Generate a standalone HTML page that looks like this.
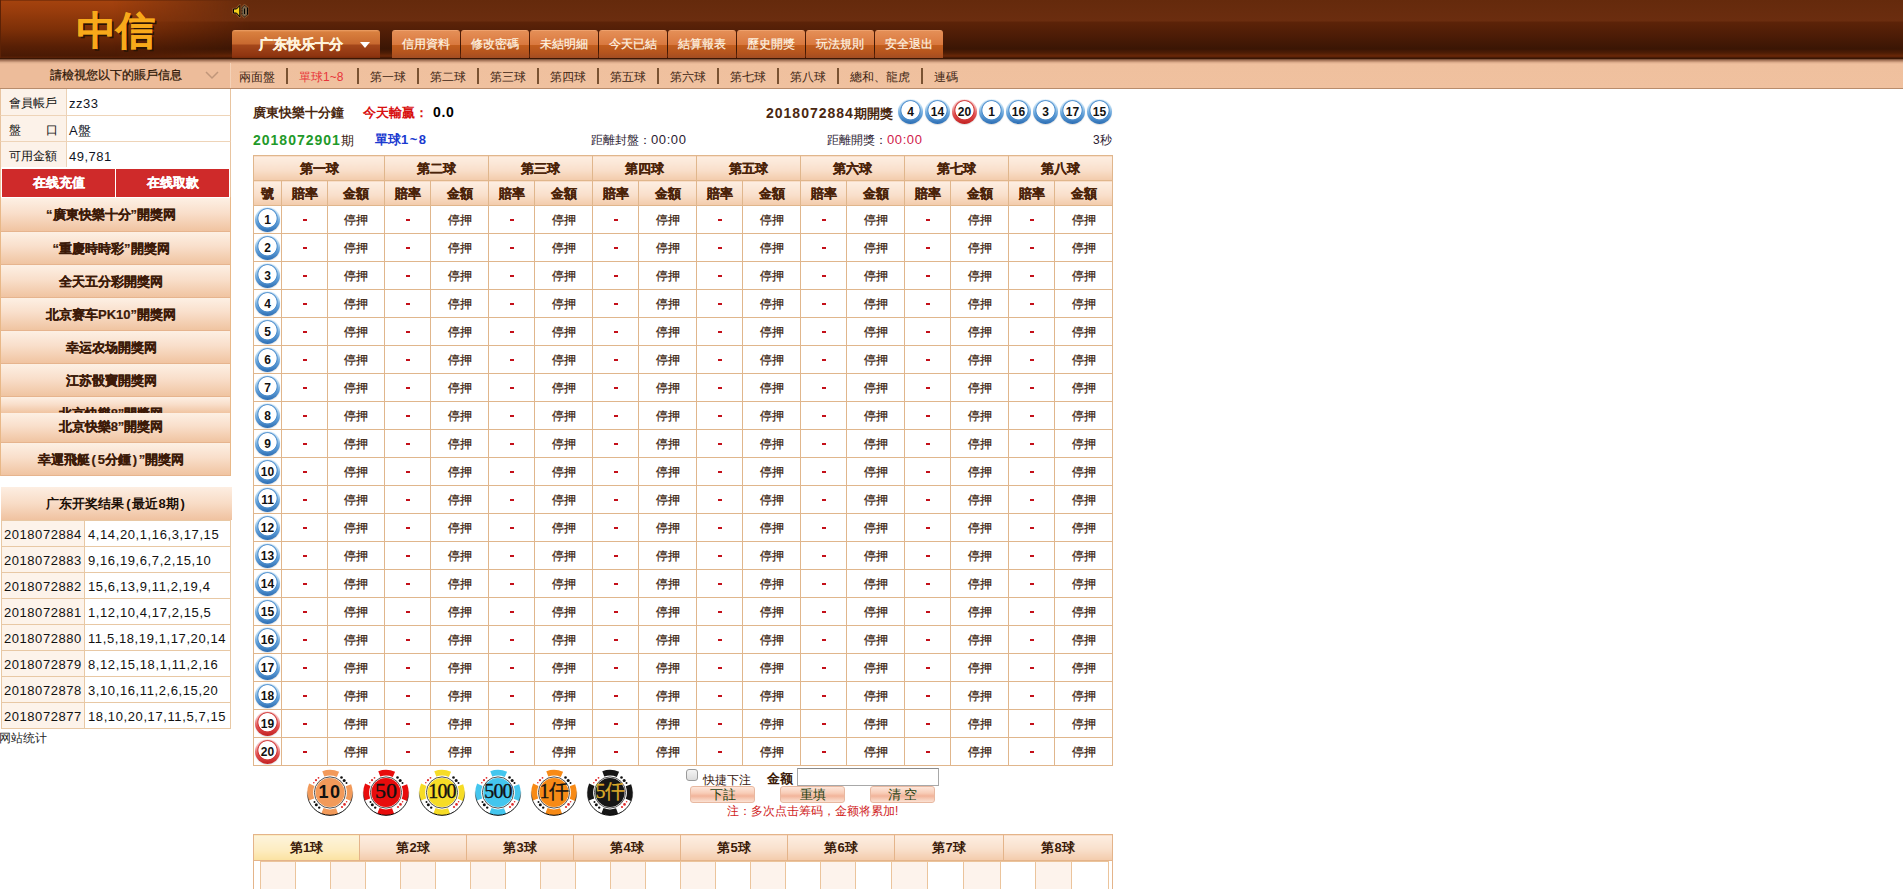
<!DOCTYPE html>
<html><head><meta charset="utf-8">
<style>
*{box-sizing:border-box}
html,body{margin:0;padding:0}
body{width:1903px;height:889px;overflow:hidden;position:relative;background:#fff;font-family:"Liberation Sans",sans-serif;font-size:12px;color:#000}
.abs{position:absolute}
/* header */
#hdr{position:absolute;left:0;top:0;width:1903px;height:60px;background:
 linear-gradient(180deg,#652a0c 0px,#6b2d0f 21px,#5c2308 22px,#4c1c06 36px,#3a1504 49px,#4e1d05 53px,#6a2808 56px,#5a2006 57px,#3a1604 58px,#3a1604 60px);overflow:hidden}
#hdrglow{position:absolute;left:0;top:0;width:250px;height:58px;background:linear-gradient(180deg,#5c2206 0,#a4420e 1px,#983c0c 20%,#7e3008 50%,#581f05 80%,#4a1a04 96%,#5a2006 100%);-webkit-mask-image:linear-gradient(90deg,#000 0,#000 45%,rgba(0,0,0,0) 100%);box-shadow:inset 1px 0 0 #5c2206}
#logo{position:absolute;left:77px;top:8px;font-size:39px;font-weight:900;-webkit-text-stroke:0.6px #f8a91a;color:#f8a91a;text-shadow:2px 2px 0 #2a1404;letter-spacing:0;line-height:46px}
.spk{position:absolute;left:232px;top:4px}
.ddl{position:absolute;left:232px;top:30px;width:148px;height:28px;border-radius:3px 3px 0 0;
 background:linear-gradient(180deg,#eca066 0,#d9803f 2px,#c8692f 14px,#a4471a 15px,#8e3410 26px,#7a2c0a 28px);color:#fff3dc;font-weight:bold;font-size:14px;line-height:28px;padding-left:27px;-webkit-text-stroke:0.3px #fff3dc}
.ddl i{position:absolute;left:128px;top:12px;width:0;height:0;border-left:5px solid transparent;border-right:5px solid transparent;border-top:6px solid #fff}
.nav{position:absolute;top:30px;height:28px;width:68px;border-radius:3px 3px 0 0;
 background:linear-gradient(180deg,#f2aa78 0,#e48e56 1.5px,#d9783e 15px,#c25e1e 15.5px,#b4541e 23px,#a24c22 28px);color:#fff4e2;font-size:12px;line-height:28px;text-align:center;-webkit-text-stroke:0.2px #fff4e2}
/* subnav */
#sub{position:absolute;left:0;top:59px;width:1903px;height:30px;background:linear-gradient(180deg,#6e4630 0,#a8785c 1.5px,#dcac8c 3.5px,#efc09e 5px,#f0c19f 29px);border-bottom:1px solid #b88c6c}
#subl{position:absolute;left:0;top:59px;width:231px;height:30px;background:linear-gradient(180deg,#6e4630 0,#a8785c 1.5px,#dcac8c 3.5px,#edbc9a 5px,#edbc9a 29px);border-bottom:1px solid #b88c6c;color:#3a2010;font-size:12px}
.tab{position:absolute;top:70px;font-size:12px;line-height:14px;color:#3d2412}
.sep{position:absolute;top:68px;width:2px;height:16px;background:#7a5232}
/* left */
.acc{position:absolute;left:0;width:231px;height:26px;border-left:1px solid #e8c4a0;border-right:1px solid #e8c4a0;border-bottom:1px solid #eed4b8;font-size:12px}
.acc .l{position:absolute;left:0;top:0;width:66px;height:100%;background:#fcf2e9;border-right:1px solid #ecd2b6;padding-left:8px;line-height:29px;color:#111}
.acc .v{position:absolute;left:68px;top:0;line-height:29px;color:#0f1424;font-size:13px;letter-spacing:0.5px}
.rbtn{position:absolute;top:169px;height:28px;background:#cf2a2a;color:#fff;font-weight:bold;font-size:13px;text-align:center;line-height:28px;-webkit-text-stroke:0.3px #fff}
.lbtn{position:absolute;left:1px;width:229px;height:33px;background:linear-gradient(180deg,#fdf0e4 0,#f9dfcb 45%,#f0c4a1 100%);border-bottom:1px solid #e6b48e;color:#3c1a08;font-weight:bold;font-size:13px;text-align:center;line-height:33px;overflow:hidden;white-space:nowrap;padding-right:9px;-webkit-text-stroke:0.2px #3c1a08}

.res{border-collapse:collapse;width:230px;table-layout:fixed}
.res td{border:1px solid #e8c8a4;height:26px;padding:2px 0 0 3px;font-size:13px;letter-spacing:0.6px;color:#111;white-space:nowrap;overflow:hidden}
.res td.p{width:83px;background:#fdf3ea;padding-left:2px;letter-spacing:0.55px}

#mt{border-collapse:collapse;table-layout:fixed;width:859px}
#mt th,#mt td{border:1px solid #e0b68c;padding:0;text-align:center;overflow:hidden;white-space:nowrap}
#mt th{height:25px;background:linear-gradient(180deg,#fdeee2 0,#f9e0cc 55%,#f3cbab 100%);font-weight:bold;font-size:13px;color:#4a2208;padding-top:2px;line-height:22px;-webkit-text-stroke:0.2px #4a2208}
#mt td{height:28px;font-size:12px;color:#36190a}
#mt td.tp{padding-top:2px;-webkit-text-stroke:0.2px #36190a}
.dash{display:inline-block;width:4px;height:2px;background:#c4101a;vertical-align:middle;position:relative;top:0px}
.ball{display:inline-block;width:25px;height:25px;border-radius:50%;vertical-align:middle;position:relative;
 background:radial-gradient(circle at 50% 45%,#fff 0,#fff 8.7px,#4a8ccc 9.5px,rgba(74,140,204,0) 10.8px),linear-gradient(180deg,#e8f4fc 0,#b4d8f2 30%,#62a0d8 62%,#2c6eb4 100%);
 font:bold 12px/26px "Liberation Sans",sans-serif;color:#111;text-align:center;box-shadow:0 1px 1px rgba(150,150,150,.3)}
.ball.r{background:radial-gradient(circle at 50% 45%,#fff 0,#fff 8.7px,#d03434 9.5px,rgba(208,52,52,0) 10.8px),linear-gradient(180deg,#fde8e8 0,#f4b0b0 30%,#e25252 62%,#c22020 100%)}

.cb{margin:0;width:13px;height:13px}
.btn{top:786px;width:65px;height:17px;border:1px solid #e8b8a0;border-radius:3px;background:linear-gradient(180deg,#fde6da 0,#f8cdb8 40%,#f2b49a 60%,#fbe2d4 100%);color:#1c4010;font-size:13px;line-height:15px;text-align:center}
#bt{border-collapse:collapse;table-layout:fixed;width:859px}
#bt th{border:1px solid #e4b48a;height:26px;background:linear-gradient(180deg,#fdeee2 0,#f9e0cc 55%,#f3cbab 100%);font-weight:bold;font-size:13px;color:#3a1a08;padding:0}
#bt th.sel{background:linear-gradient(180deg,#fdf4dc 0,#fdecc0 60%,#fbe2a0 100%)}
#bt td{border:1px solid #e4b48a;padding:0}
.inner{border-collapse:collapse;table-layout:fixed;width:848px}
.inner td{border:1px solid #ebc49c !important;height:40px;background:#fff}
.inner td.o{background:#fdf3ec}
.pp{margin:0 1.8px}
</style></head><body>
<div id="hdr"><div id="hdrglow"></div>
<div id="logo">中信</div>
<svg class="abs" style="left:230px;top:3px" width="22" height="17" viewBox="0 0 22 17">
<g fill="none" stroke="#9a6236" stroke-width="2.6" stroke-linejoin="round" opacity=".7"><path d="M3.5 6H6.5L9.8 2.5V13.8L6.5 10H3.5Z"/><path d="M12 4.8L14.4 2.3L17.6 4.8V11.6L14.4 14.1L12 11.6Z"/></g>
<path d="M3.5 6H6.5L9.8 2.5V13.8L6.5 10H3.5Z" fill="#f2cc1c" stroke="#000" stroke-width="1"/>
<path d="M12 4.8L14.4 2.3L17.6 4.8V11.6L14.4 14.1L12 11.6Z" fill="#7c664a" stroke="#000" stroke-width="0.9" stroke-dasharray="1 0.6"/>
<path d="M17.6 4.8V11.6M14.5 5.5V11" stroke="#000" stroke-width="1"/>
</svg>
<div class="ddl">广东快乐十分<i></i></div>
<div class="nav" style="left:392px">信用資料</div>
<div class="nav" style="left:461px">修改密碼</div>
<div class="nav" style="left:530px">未結明細</div>
<div class="nav" style="left:599px">今天已結</div>
<div class="nav" style="left:668px">結算報表</div>
<div class="nav" style="left:737px">歷史開獎</div>
<div class="nav" style="left:806px">玩法規則</div>
<div class="nav" style="left:875px">安全退出</div>
</div>
<div id="sub"></div>
<div id="subl"></div><div class="abs" style="left:230px;top:63px;width:1px;height:25px;background:#f4d2b8"></div>

<div class="abs" style="left:50px;top:60px;height:30px;line-height:31px;font-size:12px;color:#2e1606;-webkit-text-stroke:0.25px #2e1606;letter-spacing:-0.05px">請檢視您以下的賬戶信息</div>
<svg class="abs" style="left:205px;top:71px" width="14" height="9" viewBox="0 0 14 9"><path d="M1 1l6 6 6-6" fill="none" stroke="#c0967a" stroke-width="1.5"/></svg>
<div class="tab" style="left:239px">兩面盤</div><div class="sep" style="left:286px"></div>
<div class="tab" style="left:299px;color:#e8353a">單球1~8</div><div class="sep" style="left:357px"></div>
<div class="tab" style="left:370px">第一球</div><div class="sep" style="left:417px"></div>
<div class="tab" style="left:430px">第二球</div><div class="sep" style="left:477px"></div>
<div class="tab" style="left:490px">第三球</div><div class="sep" style="left:537px"></div>
<div class="tab" style="left:550px">第四球</div><div class="sep" style="left:597px"></div>
<div class="tab" style="left:610px">第五球</div><div class="sep" style="left:657px"></div>
<div class="tab" style="left:670px">第六球</div><div class="sep" style="left:717px"></div>
<div class="tab" style="left:730px">第七球</div><div class="sep" style="left:777px"></div>
<div class="tab" style="left:790px">第八球</div><div class="sep" style="left:837px"></div>
<div class="tab" style="left:850px">總和、龍虎</div><div class="sep" style="left:921px"></div>
<div class="tab" style="left:934px">連碼</div>

<div class="acc" style="top:89px;height:27px"><div class="l">會員帳戶</div><div class="v">zz33</div></div>
<div class="acc" style="top:116px"><div class="l" style="text-align:justify;text-align-last:justify;padding-right:8px">盤 口</div><div class="v">A盤</div></div>
<div class="acc" style="top:142px"><div class="l">可用金額</div><div class="v">49,781</div></div>
<div class="abs" style="left:0;top:167px;width:231px;height:31px;background:#fff;border-left:1px solid #e8c4a0;border-right:1px solid #e8c4a0"></div>
<div class="rbtn" style="left:2px;width:113px">在线充值</div>
<div class="rbtn" style="left:116px;width:113px">在线取款</div>
<div class="abs" style="left:0;top:197px;width:231px;height:279px;border-left:1px solid #e8b888;border-right:1px solid #e8b888;border-bottom:1px solid #e8b888"></div>
<div class="lbtn" style="top:198px;height:34px">“廣東快樂十分”開獎网</div>
<div class="lbtn" style="top:232px">“重慶時時彩”開獎网</div>
<div class="lbtn" style="top:265px">全天五分彩開獎网</div>
<div class="lbtn" style="top:298px">北京赛车PK10”開獎网</div>
<div class="lbtn" style="top:331px">幸运农场開獎网</div>
<div class="lbtn" style="top:364px">江苏骰寶開獎网</div>
<div class="lbtn" style="top:397px;height:16px;line-height:33px;border-bottom:none">北京快樂8”開獎网</div>
<div class="lbtn" style="top:413px;height:30px;line-height:28px">北京快樂8”開獎网</div>
<div class="lbtn" style="top:443px">幸運飛艇<span class="pp">(</span>5分鍾<span class="pp">)</span>”開獎网</div>

<div class="abs" style="left:1px;top:487px;width:231px;height:33px;background:linear-gradient(180deg,#fdeee2 0,#f8dcc6 50%,#f0c2a0 100%);text-align:center;line-height:33px;font-weight:bold;font-size:13px;color:#1a0e06">广东开奖结果<span class="pp">(</span>最近8期<span class="pp">)</span></div>
<table class="abs res" style="left:1px;top:520px">
<tr><td class="p">2018072884</td><td>4,14,20,1,16,3,17,15</td></tr>
<tr><td class="p">2018072883</td><td>9,16,19,6,7,2,15,10</td></tr>
<tr><td class="p">2018072882</td><td>15,6,13,9,11,2,19,4</td></tr>
<tr><td class="p">2018072881</td><td>1,12,10,4,17,2,15,5</td></tr>
<tr><td class="p">2018072880</td><td>11,5,18,19,1,17,20,14</td></tr>
<tr><td class="p">2018072879</td><td>8,12,15,18,1,11,2,16</td></tr>
<tr><td class="p">2018072878</td><td>3,10,16,11,2,6,15,20</td></tr>
<tr><td class="p">2018072877</td><td>18,10,20,17,11,5,7,15</td></tr>
</table>
<div class="abs" style="left:-1px;top:731px;font-size:12px;color:#222;line-height:14px">网站统计</div>

<div class="abs" style="left:253px;top:105px;font-weight:bold;font-size:13px;color:#4a2810;line-height:16px">廣東快樂十分鐘</div>
<div class="abs" style="left:363px;top:105px;font-weight:bold;font-size:13px;color:#d81010;line-height:16px">今天輸贏：</div>
<div class="abs" style="left:433px;top:104px;font-weight:bold;font-size:14px;color:#000;line-height:16px;letter-spacing:0.6px">0.0</div>
<div class="abs" style="left:766px;top:105px;font-weight:bold;font-size:13px;color:#4a2810;line-height:16px"><span style="letter-spacing:1px;font-size:14px">2018072884</span>期開獎</div>
<span class="ball big" style="position:absolute;left:898px;top:99px">4</span><span class="ball big" style="position:absolute;left:925px;top:99px">14</span><span class="ball r big" style="position:absolute;left:952px;top:99px">20</span><span class="ball big" style="position:absolute;left:979px;top:99px">1</span><span class="ball big" style="position:absolute;left:1006px;top:99px">16</span><span class="ball big" style="position:absolute;left:1033px;top:99px">3</span><span class="ball big" style="position:absolute;left:1060px;top:99px">17</span><span class="ball big" style="position:absolute;left:1087px;top:99px">15</span>
<div class="abs" style="left:253px;top:132px;font-size:13px;line-height:16px;color:#3a2010"><b style="color:#1f9a2a;letter-spacing:1px;font-size:14px">2018072901</b>期</div>
<div class="abs" style="left:375px;top:132px;font-size:13px;line-height:16px;color:#1a3ad0;font-weight:bold">單球<span style="letter-spacing:1.5px">1~8</span></div>
<div class="abs" style="left:591px;top:132px;font-size:12px;line-height:16px;color:#2a2030">距離封盤：<span style="font-size:13px;letter-spacing:0.6px">00:00</span></div>
<div class="abs" style="left:827px;top:132px;font-size:12px;line-height:16px;color:#2a2030">距離開獎：<span style="color:#d0204a;font-size:13px;letter-spacing:0.6px">00:00</span></div>
<div class="abs" style="left:1093px;top:132px;font-size:12px;line-height:16px;color:#2a2030">3秒</div>
<table id="mt" class="abs" style="left:253px;top:155px"><colgroup><col style="width:28px"><col style="width:46px"><col style="width:57px"><col style="width:46px"><col style="width:58px"><col style="width:46px"><col style="width:58px"><col style="width:46px"><col style="width:58px"><col style="width:46px"><col style="width:58px"><col style="width:46px"><col style="width:58px"><col style="width:46px"><col style="width:58px"><col style="width:46px"><col style="width:58px"></colgroup><tr class="h1"><th colspan="3">第一球</th><th colspan="2">第二球</th><th colspan="2">第三球</th><th colspan="2">第四球</th><th colspan="2">第五球</th><th colspan="2">第六球</th><th colspan="2">第七球</th><th colspan="2">第八球</th></tr>
<tr class="h2"><th>號</th><th>賠率</th><th>金額</th><th>賠率</th><th>金額</th><th>賠率</th><th>金額</th><th>賠率</th><th>金額</th><th>賠率</th><th>金額</th><th>賠率</th><th>金額</th><th>賠率</th><th>金額</th><th>賠率</th><th>金額</th></tr>
<tr><td><span class="ball">1</span></td><td><b class="dash"></b></td><td class="tp">停押</td><td><b class="dash"></b></td><td class="tp">停押</td><td><b class="dash"></b></td><td class="tp">停押</td><td><b class="dash"></b></td><td class="tp">停押</td><td><b class="dash"></b></td><td class="tp">停押</td><td><b class="dash"></b></td><td class="tp">停押</td><td><b class="dash"></b></td><td class="tp">停押</td><td><b class="dash"></b></td><td class="tp">停押</td></tr>
<tr><td><span class="ball">2</span></td><td><b class="dash"></b></td><td class="tp">停押</td><td><b class="dash"></b></td><td class="tp">停押</td><td><b class="dash"></b></td><td class="tp">停押</td><td><b class="dash"></b></td><td class="tp">停押</td><td><b class="dash"></b></td><td class="tp">停押</td><td><b class="dash"></b></td><td class="tp">停押</td><td><b class="dash"></b></td><td class="tp">停押</td><td><b class="dash"></b></td><td class="tp">停押</td></tr>
<tr><td><span class="ball">3</span></td><td><b class="dash"></b></td><td class="tp">停押</td><td><b class="dash"></b></td><td class="tp">停押</td><td><b class="dash"></b></td><td class="tp">停押</td><td><b class="dash"></b></td><td class="tp">停押</td><td><b class="dash"></b></td><td class="tp">停押</td><td><b class="dash"></b></td><td class="tp">停押</td><td><b class="dash"></b></td><td class="tp">停押</td><td><b class="dash"></b></td><td class="tp">停押</td></tr>
<tr><td><span class="ball">4</span></td><td><b class="dash"></b></td><td class="tp">停押</td><td><b class="dash"></b></td><td class="tp">停押</td><td><b class="dash"></b></td><td class="tp">停押</td><td><b class="dash"></b></td><td class="tp">停押</td><td><b class="dash"></b></td><td class="tp">停押</td><td><b class="dash"></b></td><td class="tp">停押</td><td><b class="dash"></b></td><td class="tp">停押</td><td><b class="dash"></b></td><td class="tp">停押</td></tr>
<tr><td><span class="ball">5</span></td><td><b class="dash"></b></td><td class="tp">停押</td><td><b class="dash"></b></td><td class="tp">停押</td><td><b class="dash"></b></td><td class="tp">停押</td><td><b class="dash"></b></td><td class="tp">停押</td><td><b class="dash"></b></td><td class="tp">停押</td><td><b class="dash"></b></td><td class="tp">停押</td><td><b class="dash"></b></td><td class="tp">停押</td><td><b class="dash"></b></td><td class="tp">停押</td></tr>
<tr><td><span class="ball">6</span></td><td><b class="dash"></b></td><td class="tp">停押</td><td><b class="dash"></b></td><td class="tp">停押</td><td><b class="dash"></b></td><td class="tp">停押</td><td><b class="dash"></b></td><td class="tp">停押</td><td><b class="dash"></b></td><td class="tp">停押</td><td><b class="dash"></b></td><td class="tp">停押</td><td><b class="dash"></b></td><td class="tp">停押</td><td><b class="dash"></b></td><td class="tp">停押</td></tr>
<tr><td><span class="ball">7</span></td><td><b class="dash"></b></td><td class="tp">停押</td><td><b class="dash"></b></td><td class="tp">停押</td><td><b class="dash"></b></td><td class="tp">停押</td><td><b class="dash"></b></td><td class="tp">停押</td><td><b class="dash"></b></td><td class="tp">停押</td><td><b class="dash"></b></td><td class="tp">停押</td><td><b class="dash"></b></td><td class="tp">停押</td><td><b class="dash"></b></td><td class="tp">停押</td></tr>
<tr><td><span class="ball">8</span></td><td><b class="dash"></b></td><td class="tp">停押</td><td><b class="dash"></b></td><td class="tp">停押</td><td><b class="dash"></b></td><td class="tp">停押</td><td><b class="dash"></b></td><td class="tp">停押</td><td><b class="dash"></b></td><td class="tp">停押</td><td><b class="dash"></b></td><td class="tp">停押</td><td><b class="dash"></b></td><td class="tp">停押</td><td><b class="dash"></b></td><td class="tp">停押</td></tr>
<tr><td><span class="ball">9</span></td><td><b class="dash"></b></td><td class="tp">停押</td><td><b class="dash"></b></td><td class="tp">停押</td><td><b class="dash"></b></td><td class="tp">停押</td><td><b class="dash"></b></td><td class="tp">停押</td><td><b class="dash"></b></td><td class="tp">停押</td><td><b class="dash"></b></td><td class="tp">停押</td><td><b class="dash"></b></td><td class="tp">停押</td><td><b class="dash"></b></td><td class="tp">停押</td></tr>
<tr><td><span class="ball">10</span></td><td><b class="dash"></b></td><td class="tp">停押</td><td><b class="dash"></b></td><td class="tp">停押</td><td><b class="dash"></b></td><td class="tp">停押</td><td><b class="dash"></b></td><td class="tp">停押</td><td><b class="dash"></b></td><td class="tp">停押</td><td><b class="dash"></b></td><td class="tp">停押</td><td><b class="dash"></b></td><td class="tp">停押</td><td><b class="dash"></b></td><td class="tp">停押</td></tr>
<tr><td><span class="ball">11</span></td><td><b class="dash"></b></td><td class="tp">停押</td><td><b class="dash"></b></td><td class="tp">停押</td><td><b class="dash"></b></td><td class="tp">停押</td><td><b class="dash"></b></td><td class="tp">停押</td><td><b class="dash"></b></td><td class="tp">停押</td><td><b class="dash"></b></td><td class="tp">停押</td><td><b class="dash"></b></td><td class="tp">停押</td><td><b class="dash"></b></td><td class="tp">停押</td></tr>
<tr><td><span class="ball">12</span></td><td><b class="dash"></b></td><td class="tp">停押</td><td><b class="dash"></b></td><td class="tp">停押</td><td><b class="dash"></b></td><td class="tp">停押</td><td><b class="dash"></b></td><td class="tp">停押</td><td><b class="dash"></b></td><td class="tp">停押</td><td><b class="dash"></b></td><td class="tp">停押</td><td><b class="dash"></b></td><td class="tp">停押</td><td><b class="dash"></b></td><td class="tp">停押</td></tr>
<tr><td><span class="ball">13</span></td><td><b class="dash"></b></td><td class="tp">停押</td><td><b class="dash"></b></td><td class="tp">停押</td><td><b class="dash"></b></td><td class="tp">停押</td><td><b class="dash"></b></td><td class="tp">停押</td><td><b class="dash"></b></td><td class="tp">停押</td><td><b class="dash"></b></td><td class="tp">停押</td><td><b class="dash"></b></td><td class="tp">停押</td><td><b class="dash"></b></td><td class="tp">停押</td></tr>
<tr><td><span class="ball">14</span></td><td><b class="dash"></b></td><td class="tp">停押</td><td><b class="dash"></b></td><td class="tp">停押</td><td><b class="dash"></b></td><td class="tp">停押</td><td><b class="dash"></b></td><td class="tp">停押</td><td><b class="dash"></b></td><td class="tp">停押</td><td><b class="dash"></b></td><td class="tp">停押</td><td><b class="dash"></b></td><td class="tp">停押</td><td><b class="dash"></b></td><td class="tp">停押</td></tr>
<tr><td><span class="ball">15</span></td><td><b class="dash"></b></td><td class="tp">停押</td><td><b class="dash"></b></td><td class="tp">停押</td><td><b class="dash"></b></td><td class="tp">停押</td><td><b class="dash"></b></td><td class="tp">停押</td><td><b class="dash"></b></td><td class="tp">停押</td><td><b class="dash"></b></td><td class="tp">停押</td><td><b class="dash"></b></td><td class="tp">停押</td><td><b class="dash"></b></td><td class="tp">停押</td></tr>
<tr><td><span class="ball">16</span></td><td><b class="dash"></b></td><td class="tp">停押</td><td><b class="dash"></b></td><td class="tp">停押</td><td><b class="dash"></b></td><td class="tp">停押</td><td><b class="dash"></b></td><td class="tp">停押</td><td><b class="dash"></b></td><td class="tp">停押</td><td><b class="dash"></b></td><td class="tp">停押</td><td><b class="dash"></b></td><td class="tp">停押</td><td><b class="dash"></b></td><td class="tp">停押</td></tr>
<tr><td><span class="ball">17</span></td><td><b class="dash"></b></td><td class="tp">停押</td><td><b class="dash"></b></td><td class="tp">停押</td><td><b class="dash"></b></td><td class="tp">停押</td><td><b class="dash"></b></td><td class="tp">停押</td><td><b class="dash"></b></td><td class="tp">停押</td><td><b class="dash"></b></td><td class="tp">停押</td><td><b class="dash"></b></td><td class="tp">停押</td><td><b class="dash"></b></td><td class="tp">停押</td></tr>
<tr><td><span class="ball">18</span></td><td><b class="dash"></b></td><td class="tp">停押</td><td><b class="dash"></b></td><td class="tp">停押</td><td><b class="dash"></b></td><td class="tp">停押</td><td><b class="dash"></b></td><td class="tp">停押</td><td><b class="dash"></b></td><td class="tp">停押</td><td><b class="dash"></b></td><td class="tp">停押</td><td><b class="dash"></b></td><td class="tp">停押</td><td><b class="dash"></b></td><td class="tp">停押</td></tr>
<tr><td><span class="ball r">19</span></td><td><b class="dash"></b></td><td class="tp">停押</td><td><b class="dash"></b></td><td class="tp">停押</td><td><b class="dash"></b></td><td class="tp">停押</td><td><b class="dash"></b></td><td class="tp">停押</td><td><b class="dash"></b></td><td class="tp">停押</td><td><b class="dash"></b></td><td class="tp">停押</td><td><b class="dash"></b></td><td class="tp">停押</td><td><b class="dash"></b></td><td class="tp">停押</td></tr>
<tr><td><span class="ball r">20</span></td><td><b class="dash"></b></td><td class="tp">停押</td><td><b class="dash"></b></td><td class="tp">停押</td><td><b class="dash"></b></td><td class="tp">停押</td><td><b class="dash"></b></td><td class="tp">停押</td><td><b class="dash"></b></td><td class="tp">停押</td><td><b class="dash"></b></td><td class="tp">停押</td><td><b class="dash"></b></td><td class="tp">停押</td><td><b class="dash"></b></td><td class="tp">停押</td></tr></table>
<svg class="abs" style="left:306px;top:768px" width="48" height="50" viewBox="0 0 48 50">
<defs><linearGradient id="og330" x1="0" y1="0" x2="0" y2="1"><stop offset="0.45" stop-color="#000" stop-opacity="0"/><stop offset="0.7" stop-color="#111" stop-opacity=".85"/><stop offset="1" stop-color="#000" stop-opacity="1"/></linearGradient></defs>
<circle cx="24" cy="24.5" r="22.6" fill="#fff"/>
<circle cx="24" cy="24.5" r="19.8" fill="none" stroke="#f29a5a" stroke-width="5.8" stroke-dasharray="14.9 16.2" transform="rotate(-21.5 24 24.5)"/>
<circle cx="24" cy="24.5" r="22.8" fill="none" stroke="url(#og330)" stroke-width="1"/>
<circle cx="24" cy="24.5" r="15.6" fill="#fff" stroke="#222" stroke-width="0.8"/>
<circle cx="24" cy="24.5" r="14.6" fill="#f29a5a"/>
<g fill="#111"><circle cx="35.5" cy="9.5" r="1.3"/><circle cx="38.2" cy="12.4" r="1.5"/><circle cx="40.5" cy="15" r="1"/><circle cx="8.5" cy="34" r="1"/><circle cx="10.3" cy="36.8" r="1.5"/><circle cx="13.2" cy="39.6" r="1.2"/></g>
<g fill="#e02828"><circle cx="12.5" cy="9.8" r="0.9"/><circle cx="10" cy="12.2" r="1.1"/><circle cx="7.8" cy="14.8" r="0.8"/><circle cx="36" cy="39" r="1.1"/><circle cx="38.5" cy="36.4" r="1.3"/><circle cx="40.6" cy="33.8" r="0.8"/></g>
<text x="24" y="30" text-anchor="middle" font-family='"Liberation Sans",sans-serif' font-size="18" font-weight="bold" fill="#111" letter-spacing="1.5">10</text>
</svg><svg class="abs" style="left:362px;top:768px" width="48" height="50" viewBox="0 0 48 50">
<defs><linearGradient id="og386" x1="0" y1="0" x2="0" y2="1"><stop offset="0.45" stop-color="#000" stop-opacity="0"/><stop offset="0.7" stop-color="#111" stop-opacity=".85"/><stop offset="1" stop-color="#000" stop-opacity="1"/></linearGradient></defs>
<circle cx="24" cy="24.5" r="22.6" fill="#fff"/>
<circle cx="24" cy="24.5" r="19.8" fill="none" stroke="#e80c0c" stroke-width="5.8" stroke-dasharray="14.9 16.2" transform="rotate(-21.5 24 24.5)"/>
<circle cx="24" cy="24.5" r="22.8" fill="none" stroke="url(#og386)" stroke-width="1"/>
<circle cx="24" cy="24.5" r="15.6" fill="#fff" stroke="#222" stroke-width="0.8"/>
<circle cx="24" cy="24.5" r="14.6" fill="#e80c0c"/>
<g fill="#111"><circle cx="35.5" cy="9.5" r="1.3"/><circle cx="38.2" cy="12.4" r="1.5"/><circle cx="40.5" cy="15" r="1"/><circle cx="8.5" cy="34" r="1"/><circle cx="10.3" cy="36.8" r="1.5"/><circle cx="13.2" cy="39.6" r="1.2"/></g>
<g fill="#e02828"><circle cx="12.5" cy="9.8" r="0.9"/><circle cx="10" cy="12.2" r="1.1"/><circle cx="7.8" cy="14.8" r="0.8"/><circle cx="36" cy="39" r="1.1"/><circle cx="38.5" cy="36.4" r="1.3"/><circle cx="40.6" cy="33.8" r="0.8"/></g>
<text x="24" y="30" text-anchor="middle" font-family='"Liberation Serif",serif' font-size="22" font-weight="normal" fill="#111" letter-spacing="0" stroke="#111" stroke-width="0.35">50</text>
</svg><svg class="abs" style="left:418px;top:768px" width="48" height="50" viewBox="0 0 48 50">
<defs><linearGradient id="og442" x1="0" y1="0" x2="0" y2="1"><stop offset="0.45" stop-color="#000" stop-opacity="0"/><stop offset="0.7" stop-color="#111" stop-opacity=".85"/><stop offset="1" stop-color="#000" stop-opacity="1"/></linearGradient></defs>
<circle cx="24" cy="24.5" r="22.6" fill="#fff"/>
<circle cx="24" cy="24.5" r="19.8" fill="none" stroke="#f6dc26" stroke-width="5.8" stroke-dasharray="14.9 16.2" transform="rotate(-21.5 24 24.5)"/>
<circle cx="24" cy="24.5" r="22.8" fill="none" stroke="url(#og442)" stroke-width="1"/>
<circle cx="24" cy="24.5" r="15.6" fill="#fff" stroke="#222" stroke-width="0.8"/>
<circle cx="24" cy="24.5" r="14.6" fill="#f6dc26"/>
<g fill="#111"><circle cx="35.5" cy="9.5" r="1.3"/><circle cx="38.2" cy="12.4" r="1.5"/><circle cx="40.5" cy="15" r="1"/><circle cx="8.5" cy="34" r="1"/><circle cx="10.3" cy="36.8" r="1.5"/><circle cx="13.2" cy="39.6" r="1.2"/></g>
<g fill="#e02828"><circle cx="12.5" cy="9.8" r="0.9"/><circle cx="10" cy="12.2" r="1.1"/><circle cx="7.8" cy="14.8" r="0.8"/><circle cx="36" cy="39" r="1.1"/><circle cx="38.5" cy="36.4" r="1.3"/><circle cx="40.6" cy="33.8" r="0.8"/></g>
<text x="24" y="30" text-anchor="middle" font-family='"Liberation Serif",serif' font-size="20" font-weight="normal" fill="#111" letter-spacing="-0.8" stroke="#111" stroke-width="0.35">100</text>
</svg><svg class="abs" style="left:474px;top:768px" width="48" height="50" viewBox="0 0 48 50">
<defs><linearGradient id="og498" x1="0" y1="0" x2="0" y2="1"><stop offset="0.45" stop-color="#000" stop-opacity="0"/><stop offset="0.7" stop-color="#111" stop-opacity=".85"/><stop offset="1" stop-color="#000" stop-opacity="1"/></linearGradient></defs>
<circle cx="24" cy="24.5" r="22.6" fill="#fff"/>
<circle cx="24" cy="24.5" r="19.8" fill="none" stroke="#44c6ee" stroke-width="5.8" stroke-dasharray="14.9 16.2" transform="rotate(-21.5 24 24.5)"/>
<circle cx="24" cy="24.5" r="22.8" fill="none" stroke="url(#og498)" stroke-width="1"/>
<circle cx="24" cy="24.5" r="15.6" fill="#fff" stroke="#222" stroke-width="0.8"/>
<circle cx="24" cy="24.5" r="14.6" fill="#44c6ee"/>
<g fill="#111"><circle cx="35.5" cy="9.5" r="1.3"/><circle cx="38.2" cy="12.4" r="1.5"/><circle cx="40.5" cy="15" r="1"/><circle cx="8.5" cy="34" r="1"/><circle cx="10.3" cy="36.8" r="1.5"/><circle cx="13.2" cy="39.6" r="1.2"/></g>
<g fill="#e02828"><circle cx="12.5" cy="9.8" r="0.9"/><circle cx="10" cy="12.2" r="1.1"/><circle cx="7.8" cy="14.8" r="0.8"/><circle cx="36" cy="39" r="1.1"/><circle cx="38.5" cy="36.4" r="1.3"/><circle cx="40.6" cy="33.8" r="0.8"/></g>
<text x="24" y="30" text-anchor="middle" font-family='"Liberation Serif",serif' font-size="20" font-weight="normal" fill="#111" letter-spacing="-0.8" stroke="#111" stroke-width="0.35">500</text>
</svg><svg class="abs" style="left:530px;top:768px" width="48" height="50" viewBox="0 0 48 50">
<defs><linearGradient id="og554" x1="0" y1="0" x2="0" y2="1"><stop offset="0.45" stop-color="#000" stop-opacity="0"/><stop offset="0.7" stop-color="#111" stop-opacity=".85"/><stop offset="1" stop-color="#000" stop-opacity="1"/></linearGradient></defs>
<circle cx="24" cy="24.5" r="22.6" fill="#fff"/>
<circle cx="24" cy="24.5" r="19.8" fill="none" stroke="#f78a16" stroke-width="5.8" stroke-dasharray="14.9 16.2" transform="rotate(-21.5 24 24.5)"/>
<circle cx="24" cy="24.5" r="22.8" fill="none" stroke="url(#og554)" stroke-width="1"/>
<circle cx="24" cy="24.5" r="15.6" fill="#fff" stroke="#222" stroke-width="0.8"/>
<circle cx="24" cy="24.5" r="14.6" fill="#f78a16"/>
<g fill="#111"><circle cx="35.5" cy="9.5" r="1.3"/><circle cx="38.2" cy="12.4" r="1.5"/><circle cx="40.5" cy="15" r="1"/><circle cx="8.5" cy="34" r="1"/><circle cx="10.3" cy="36.8" r="1.5"/><circle cx="13.2" cy="39.6" r="1.2"/></g>
<g fill="#e02828"><circle cx="12.5" cy="9.8" r="0.9"/><circle cx="10" cy="12.2" r="1.1"/><circle cx="7.8" cy="14.8" r="0.8"/><circle cx="36" cy="39" r="1.1"/><circle cx="38.5" cy="36.4" r="1.3"/><circle cx="40.6" cy="33.8" r="0.8"/></g>
<text x="24" y="30" text-anchor="middle" font-family='"Liberation Serif",serif' font-size="20" font-weight="normal" fill="#111" letter-spacing="-0.5" stroke="#111" stroke-width="0.3">1仟</text>
</svg><svg class="abs" style="left:586px;top:768px" width="48" height="50" viewBox="0 0 48 50">
<defs><linearGradient id="og610" x1="0" y1="0" x2="0" y2="1"><stop offset="0.45" stop-color="#000" stop-opacity="0"/><stop offset="0.7" stop-color="#111" stop-opacity=".85"/><stop offset="1" stop-color="#000" stop-opacity="1"/></linearGradient></defs>
<circle cx="24" cy="24.5" r="22.6" fill="#fff"/>
<circle cx="24" cy="24.5" r="19.8" fill="none" stroke="#161616" stroke-width="5.8" stroke-dasharray="14.9 16.2" transform="rotate(-21.5 24 24.5)"/>
<circle cx="24" cy="24.5" r="22.8" fill="none" stroke="url(#og610)" stroke-width="1"/>
<circle cx="24" cy="24.5" r="15.6" fill="#fff" stroke="#222" stroke-width="0.8"/>
<circle cx="24" cy="24.5" r="14.6" fill="#161616"/>
<g fill="#111"><circle cx="35.5" cy="9.5" r="1.3"/><circle cx="38.2" cy="12.4" r="1.5"/><circle cx="40.5" cy="15" r="1"/><circle cx="8.5" cy="34" r="1"/><circle cx="10.3" cy="36.8" r="1.5"/><circle cx="13.2" cy="39.6" r="1.2"/></g>
<g fill="#e02828"><circle cx="12.5" cy="9.8" r="0.9"/><circle cx="10" cy="12.2" r="1.1"/><circle cx="7.8" cy="14.8" r="0.8"/><circle cx="36" cy="39" r="1.1"/><circle cx="38.5" cy="36.4" r="1.3"/><circle cx="40.6" cy="33.8" r="0.8"/></g>
<text x="24" y="30" text-anchor="middle" font-family='"Liberation Serif",serif' font-size="20" font-weight="normal" fill="#dcaa2a" letter-spacing="-0.5" stroke="#dcaa2a" stroke-width="0.3">5仟</text>
</svg>
<div class="abs" style="left:686px;top:769px;width:12px;height:12px;border:1px solid #9a9a9a;border-radius:3px;background:linear-gradient(180deg,#f4f4f4,#dcdcdc)"></div>
<div class="abs" style="left:703px;top:772px;font-size:12px;line-height:16px;color:#3a2010">快捷下注</div>
<div class="abs" style="left:767px;top:771px;font-size:13px;line-height:16px;color:#3a1a08;font-weight:bold">金额</div>
<div class="abs" style="left:797px;top:768px;width:142px;height:18px;border:1px solid #a8a8a8;border-top-color:#8a8a8a;background:#fff"></div>
<div class="abs btn" style="left:690px">下註</div>
<div class="abs btn" style="left:780px">重填</div>
<div class="abs btn" style="left:870px">清 空</div>
<div class="abs" style="left:727px;top:803px;font-size:12px;line-height:16px;color:#d01c1c">注：多次点击筹码，金额将累加!</div>
<table id="bt" class="abs" style="left:253px;top:834px"><colgroup><col style="width:106px"><col style="width:107px"><col style="width:107px"><col style="width:107px"><col style="width:107px"><col style="width:107px"><col style="width:109px"><col style="width:109px"></colgroup><tr><th class="sel">第1球</th><th>第2球</th><th>第3球</th><th>第4球</th><th>第5球</th><th>第6球</th><th>第7球</th><th>第8球</th></tr><tr><td colspan="8" style="padding:0 4px 0 6px;vertical-align:top"><table class="inner"><tr><td class="o" style="width:35px"></td><td style="width:35px"></td><td class="o" style="width:35px"></td><td style="width:35px"></td><td class="o" style="width:35px"></td><td style="width:35px"></td><td class="o" style="width:35px"></td><td style="width:35px"></td><td class="o" style="width:35px"></td><td style="width:35px"></td><td class="o" style="width:35px"></td><td style="width:35px"></td><td class="o" style="width:34.5px"></td><td style="width:35.1px"></td><td class="o" style="width:35.3px"></td><td style="width:35.1px"></td><td class="o" style="width:35.2px"></td><td style="width:35.9px"></td><td class="o" style="width:35.8px"></td><td style="width:36.5px"></td><td class="o" style="width:36.3px"></td><td style="width:35.8px"></td><td class="o" style="width:35.7px"></td><td style="width:36.4px"></td></tr></table></td></tr></table>
</body></html>
